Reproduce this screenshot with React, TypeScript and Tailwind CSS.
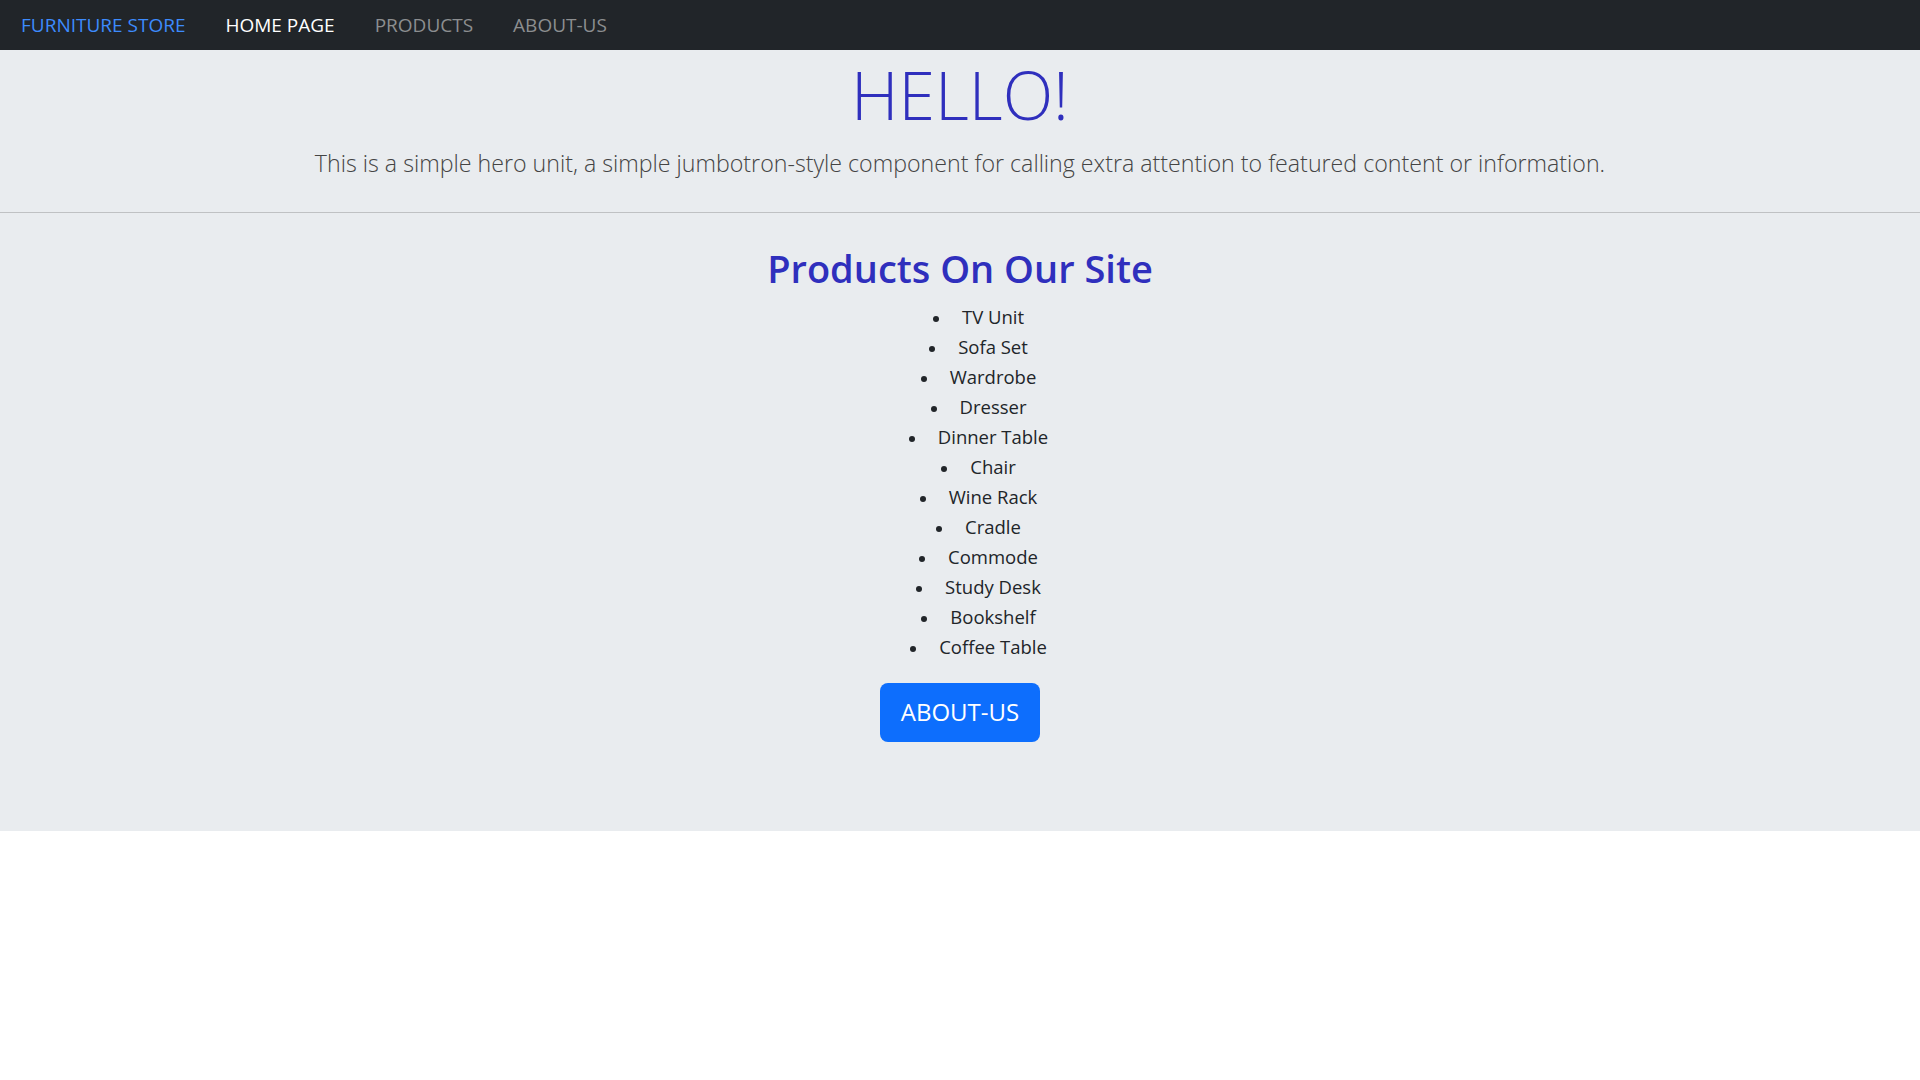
const products = [
  'TV Unit',
  'Sofa Set',
  'Wardrobe',
  'Dresser',
  'Dinner Table',
  'Chair',
  'Wine Rack',
  'Cradle',
  'Commode',
  'Study Desk',
  'Bookshelf',
  'Coffee Table',
];

export default function App() {
  return (
    <div className="min-h-screen bg-white font-['Open_Sans',sans-serif]">
      {/* Navbar */}
      <nav className="h-[50px] bg-[#212529] flex items-center px-[21px]">
        <a href="#" className="text-[19px] text-[#3d8bfd] mr-[20px]">FURNITURE STORE</a>
        <a href="#" className="text-[19px] text-white px-5">HOME PAGE</a>
        <a href="#" className="text-[19px] text-[#8c8e90] px-5">PRODUCTS</a>
        <a href="#" className="text-[19px] text-[#8c8e90] px-5">ABOUT-US</a>
      </nav>

      {/* Hero */}
      <div className="bg-[#e9ecef] pb-[89px]">
        <div className="text-center pt-[5px]">
          <h1 className="text-[66px] leading-[1.2] font-light text-[#2f2fbd]">HELLO!</h1>
          <p className="text-[23.2px] font-light text-[#444] mt-[12px]">
            This is a simple hero unit, a simple jumbotron-style component for calling extra attention to featured content or information.
          </p>
        </div>
        <hr className="mt-[31px] border-t border-[#bfc1c3]" />

        <div className="text-center pt-[33px]">
          <h2 className="text-[38px] leading-[1.2] font-semibold text-[#2f2fbd]">Products On Our Site</h2>
          <ul className="pl-[66px] text-[18.5px] leading-[30px] text-[#212529] mt-[10px]">
            {products.map((p) => (
              <li key={p}>
                <span className="relative before:content-[''] before:absolute before:left-[-29px] before:top-[12px] before:w-[6px] before:h-[6px] before:rounded-full before:bg-[#212529]">
                  {p}
                </span>
              </li>
            ))}
          </ul>
          <button className="mt-[21px] bg-[#0d6efd] text-white text-[24px] leading-[36px] px-[21px] py-[11.5px] rounded-[8px]">
            ABOUT-US
          </button>
        </div>
      </div>
    </div>
  );
}
